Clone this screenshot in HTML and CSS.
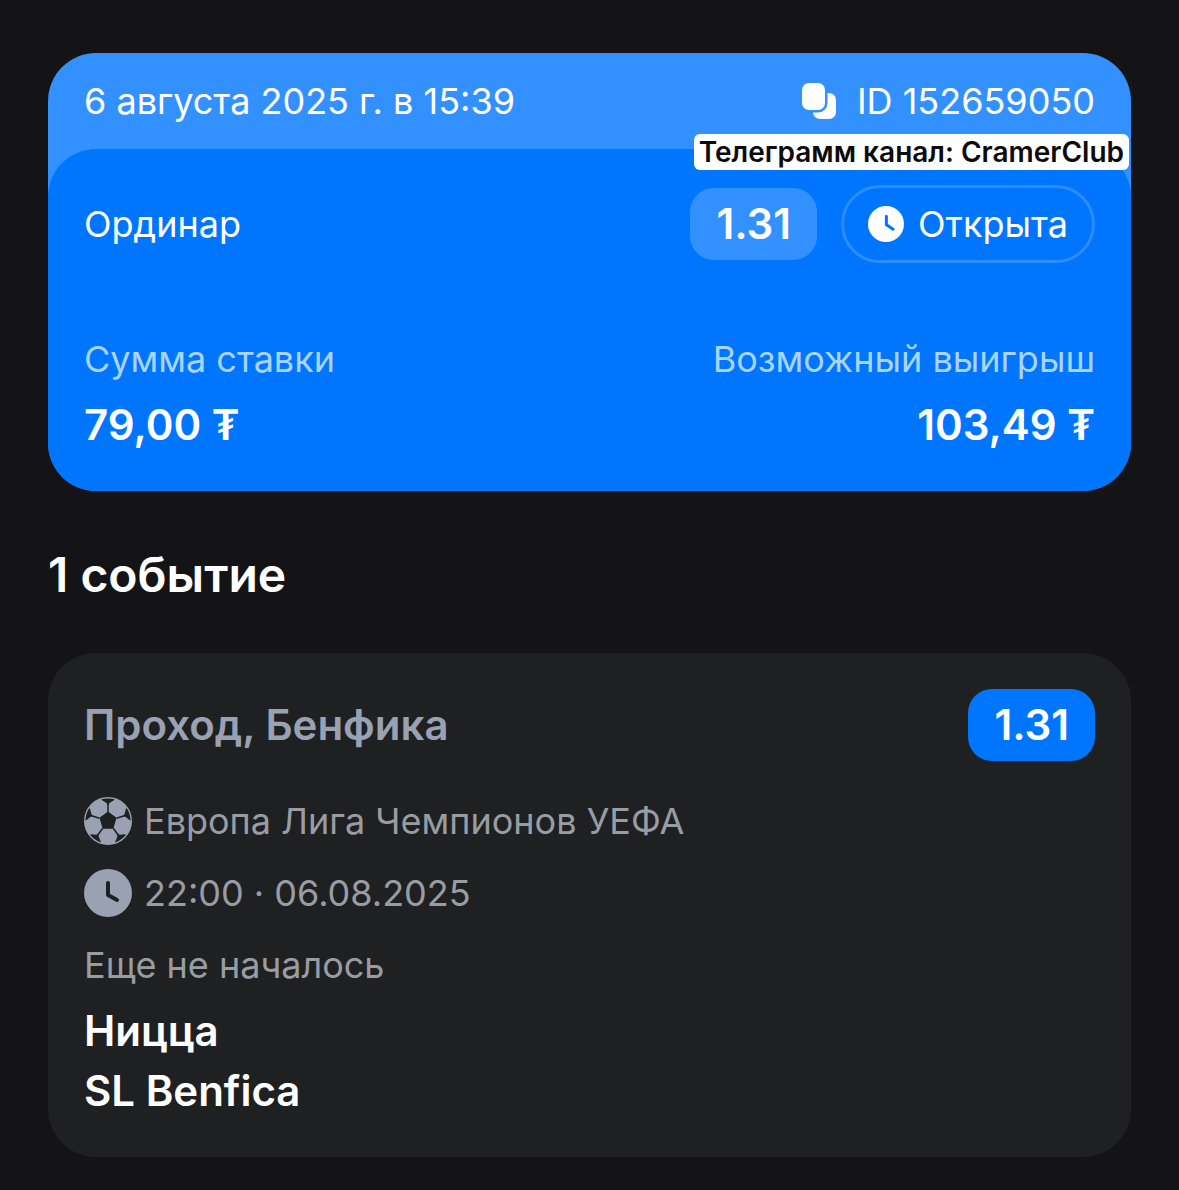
FILE: index.html
```html
<!DOCTYPE html>
<html lang="ru">
<head>
<meta charset="utf-8">
<meta name="viewport" content="width=device-width, initial-scale=1">
<title>Ставка</title>
<link rel="stylesheet" href="styles.css">
</head>
<body>
<main class="page">
  <section class="coupon">
    <header class="coupon-head">
      <time class="label" datetime="2025-08-06T15:39">6 августа 2025 г. в 15:39</time>
      <button class="copy label" type="button">
        <svg class="icon-small" viewBox="0 0 36 36" aria-hidden="true">
          <rect x="12" y="10" width="23" height="26" rx="7" fill="#fff"/>
          <rect x="1" y="0" width="23" height="27" rx="7" fill="#fff" stroke="#3391ff" stroke-width="5" paint-order="stroke"/>
        </svg>
        <span>ID 152659050</span>
      </button>
    </header>
    <div class="coupon-body">
      <div class="row">
        <span class="label">Ординар</span>
        <div class="tags">
          <span class="odds odds-light">1.31</span>
          <span class="status label">
            <svg class="icon-small" viewBox="0 0 48 48" aria-hidden="true"><circle cx="24" cy="24" r="24" fill="#fff"/><path d="M24.500 13.500v11.500l9 6" fill="none" stroke="#0076ff" stroke-width="4" stroke-linecap="round" stroke-linejoin="round"/></svg>
            <span>Открыта</span>
          </span>
        </div>
      </div>
      <dl class="sums">
        <div class="sum"><dt class="label sum-name">Сумма ставки</dt><dd class="amount">79,00 ₮</dd></div>
        <div class="sum sum-right"><dt class="label sum-name">Возможный выигрыш</dt><dd class="amount">103,49 ₮</dd></div>
      </dl>
    </div>
    <p class="channel">Телеграмм канал: CramerClub</p>
  </section>
  <h1 class="title">1 событие</h1>
  <article class="event">
    <div class="row">
      <h2 class="pick">Проход, Бенфика</h2>
      <span class="odds">1.31</span>
    </div>
    <div class="details">
      <p class="meta label">
        <svg class="icon" viewBox="0 0 48 48" aria-hidden="true">
          <defs><g id="seam"><path d="M24 15V6" stroke="#1e2022" stroke-width="1.500"/><path d="M17.500 2.300q6.500-1.800 13 0-.5 1.500-3.500 2.700-2.500 1.200-3 4-.5-2.800-3-4-3-1.200-3.500-2.700z" fill="#1e2022"/></g></defs>
          <circle cx="24" cy="24" r="24" fill="#9aa1b2"/>
          <path d="M24 14.500l8.500 6.300-3.200 11H18.700l-3.200-11z" fill="#1e2022"/>
          <use href="#seam"/><use href="#seam" transform="rotate(72 24 24)"/><use href="#seam" transform="rotate(144 24 24)"/><use href="#seam" transform="rotate(216 24 24)"/><use href="#seam" transform="rotate(288 24 24)"/>
        </svg>
        <span>Европа Лига Чемпионов УЕФА</span>
      </p>
      <p class="meta label">
        <svg class="icon" viewBox="0 0 48 48" aria-hidden="true"><circle cx="24" cy="24" r="24" fill="#9aa1b2"/><path d="M24 14v12l9 5" fill="none" stroke="#1e2022" stroke-width="4" stroke-linecap="round" stroke-linejoin="round"/></svg>
        <time datetime="2025-08-06T22:00">22:00 · 06.08.2025</time>
      </p>
      <p class="label">Еще не началось</p>
    </div>
    <p class="team">Ницца</p>
    <p class="team">SL Benfica</p>
  </article>
</main>
</body>
</html>
```
FILE: styles.css
```css
* { box-sizing: border-box; margin: 0; padding: 0; }
body { background: #141416; color: #fff; font-family: Inter, "Noto Sans", sans-serif; }
.page { padding: 53px 48px 34px; }
.label { font-size: 36px; line-height: 48px; font-weight: 400; }
.row { display: flex; justify-content: space-between; align-items: center; }
.icon-small { flex: none; width: 36px; height: 36px; }
.icon { flex: none; width: 48px; height: 48px; }

.coupon { position: relative; background: #3391ff; border-radius: 48px; }
.coupon-head { display: flex; justify-content: space-between; padding: 24px 36px; }
.copy { display: flex; align-items: center; gap: 20px; border: 0; background: none; color: inherit; font-family: inherit; cursor: pointer; }
.coupon-body { background: #0076ff; border-radius: 48px; padding: 36px 36px 42px; }
.tags { display: flex; align-items: center; gap: 24px; }
.odds { background: #0076ff; padding: 12px 26px; border-radius: 24px; font-size: 42px; line-height: 48px; font-weight: 600; }
.odds-light { background: #3391ff; }
.status { display: flex; align-items: center; gap: 14px; padding: 12px 24px; border: 3px solid #2b8dff; border-radius: 40px; }
.sums { display: flex; justify-content: space-between; margin-top: 72px; }
.sum { display: flex; flex-direction: column; gap: 18px; }
.sum-right { text-align: right; }
.sum-name { color: #a9d4ff; }
.amount { font-size: 42px; line-height: 48px; font-weight: 600; }
.channel { position: absolute; right: 2px; top: 81px; padding: 0 5px; background: #fff; border-radius: 6px; color: #0b0b0d; font-size: 28px; line-height: 36px; font-weight: 600; }

.title { margin: 54px 0 48px; font-size: 48px; line-height: 60px; font-weight: 600; }

.event { background: #1e2022; border-radius: 48px; padding: 36px; }
.pick { color: #9aa1b2; font-size: 42px; line-height: 48px; font-weight: 600; }
.details { display: flex; flex-direction: column; gap: 24px; margin: 36px 0 12px; color: #999da3; }
.meta { display: flex; align-items: center; gap: 12px; }
.team { font-size: 42px; line-height: 60px; font-weight: 600; }
```
